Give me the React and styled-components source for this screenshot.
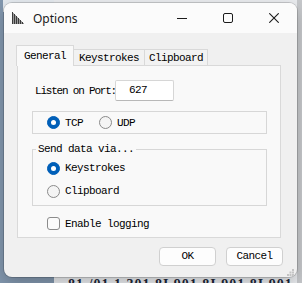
import React from 'react'
import styled, { createGlobalStyle } from 'styled-components'

const GlobalStyle = createGlobalStyle`
  html, body {
    margin: 0;
    padding: 0;
  }
  body {
    width: 302px;
    height: 283px;
    overflow: hidden;
    background: #8297ae;
  }
`

const uiFont = `"Liberation Mono", "DejaVu Sans Mono", monospace`

export default function App() {
  return (
    <Desktop>
      <GlobalStyle />
      <BackWindowTop />
      <BackWindow>
        <BackText>81 /01 1 301 8I 901 8I 901 8I 901</BackText>
      </BackWindow>

      <Window>
        <TitleBar>
          <AppIcon />
          <Title>Options</Title>
          <Controls>
            <ControlButton>
              <svg width="10" height="10" viewBox="0 0 10 10">
                <path d="M0 5.5h10" stroke="#1b1b1b" strokeWidth="1" />
              </svg>
            </ControlButton>
            <ControlButton>
              <svg width="10" height="10" viewBox="0 0 10 10">
                <rect x="0.5" y="0.5" width="9" height="9" rx="1.5" fill="none" stroke="#1b1b1b" strokeWidth="1" />
              </svg>
            </ControlButton>
            <ControlButton>
              <svg width="10" height="10" viewBox="0 0 10 10">
                <path d="M0.3 0.3L9.7 9.7M9.7 0.3L0.3 9.7" stroke="#1b1b1b" strokeWidth="1.1" />
              </svg>
            </ControlButton>
          </Controls>
        </TitleBar>

        <Content>
          <TabStrip>
            <Tab $active $width={58}>General</Tab>
            <Tab $width={71}>Keystrokes</Tab>
            <Tab $width={63}>Clipboard</Tab>
          </TabStrip>

          <Panel>
            <PortRow>
              <PortLabel>Listen on Port:</PortLabel>
              <PortInput>627</PortInput>
            </PortRow>

            <ProtocolGroup>
              <Radio checked label="TCP" />
              <Radio label="UDP" />
            </ProtocolGroup>

            <SendGroup>
              <Legend>Send data via...</Legend>
              <RadioList>
                <Radio checked label="Keystrokes" />
                <Radio label="Clipboard" />
              </RadioList>
            </SendGroup>

            <CheckRow>
              <CheckBox />
              <span>Enable logging</span>
            </CheckRow>
          </Panel>

          <ButtonRow>
            <Button>OK</Button>
            <Button>Cancel</Button>
          </ButtonRow>
        </Content>

        <Grip>
          <svg width="7" height="7" viewBox="0 0 7 7">
            <rect x="5" y="0" width="2" height="2" fill="#c4c4c4" />
            <rect x="2.5" y="2.5" width="2" height="2" fill="#c4c4c4" />
            <rect x="5" y="2.5" width="2" height="2" fill="#c4c4c4" />
            <rect x="0" y="5" width="2" height="2" fill="#c4c4c4" />
            <rect x="2.5" y="5" width="2" height="2" fill="#c4c4c4" />
            <rect x="5" y="5" width="2" height="2" fill="#c4c4c4" />
          </svg>
        </Grip>
      </Window>
    </Desktop>
  )
}

function AppIcon() {
  const bars = []
  for (let i = 0; i < 12; i++) {
    bars.push(
      <rect key={i} x={i} y={i} width="1" height={12 - i} fill={i % 2 === 0 ? '#3a3a3a' : '#9a9a9a'} />
    )
  }
  return (
    <IconBox width="12" height="12" viewBox="0 0 12 12">
      {bars}
    </IconBox>
  )
}

function Radio({ checked, label }) {
  return (
    <RadioItem>
      <RadioCircle $checked={checked} />
      <span>{label}</span>
    </RadioItem>
  )
}

const Desktop = styled.div`
  position: relative;
  width: 302px;
  height: 283px;
  overflow: hidden;
  box-sizing: border-box;
  padding: 3px 0 0 4px;
  background: #8297ae;
`

const BackWindowTop = styled.div`
  position: absolute;
  left: 3px;
  top: 0;
  right: 0;
  height: 12px;
  background: #e4e9ee;
`

const BackWindow = styled.div`
  position: absolute;
  left: 54px;
  top: 0;
  right: 0;
  bottom: 0;
  background: #e9ebee;
  border-right: 5px solid #c6c8cb;
`

const BackText = styled.div`
  position: absolute;
  left: 14px;
  bottom: -10px;
  font-family: "Liberation Serif", serif;
  font-size: 14px;
  font-weight: bold;
  color: #1c2638;
  white-space: nowrap;
  letter-spacing: 1px;
`

const Window = styled.div`
  position: relative;
  z-index: 1;
  width: 293px;
  height: 274px;
  display: flex;
  flex-direction: column;
  background: #f0f0f0;
  border-radius: 8px;
  overflow: hidden;
  box-shadow: 0 0 0 1px rgba(0, 0, 0, 0.16), 0 6px 16px rgba(0, 0, 0, 0.22);
  font-family: ${uiFont};
  font-size: 11px;
  letter-spacing: -0.6px;
  color: #000;
`

const TitleBar = styled.div`
  height: 30px;
  flex: none;
  display: flex;
  align-items: center;
  background: #fbfbfb;
`

const IconBox = styled.svg`
  margin-left: 8px;
  flex: none;
`

const Title = styled.div`
  margin-left: 9px;
  font-family: "Noto Sans", "Open Sans", sans-serif;
  font-size: 12px;
  letter-spacing: 0;
  color: #1a1a1a;
`

const Controls = styled.div`
  margin-left: auto;
  display: flex;
  height: 100%;
`

const ControlButton = styled.div`
  width: 46px;
  height: 100%;
  display: flex;
  align-items: center;
  justify-content: center;
`

const Content = styled.div`
  display: flex;
  flex-direction: column;
  padding: 12px 16px 0 13px;
`

const TabStrip = styled.div`
  display: flex;
  align-items: flex-start;
  height: 21px;
  margin-left: -1px;
`

const Tab = styled.div`
  position: relative;
  z-index: ${p => (p.$active ? 1 : 0)};
  box-sizing: border-box;
  width: ${p => p.$width}px;
  height: ${p => (p.$active ? 21 : 16)}px;
  margin-top: ${p => (p.$active ? 0 : 4)}px;
  line-height: ${p => (p.$active ? 20 : 16)}px;
  text-align: center;
  background: ${p => (p.$active ? '#f9f9f9' : '#f2f2f2')};
  border: 1px solid #d9d9d9;
  border-bottom: none;
  border-left: ${p => (p.$active ? '1px solid #d9d9d9' : 'none')};
`

const Panel = styled.div`
  box-sizing: border-box;
  height: 173px;
  margin-top: -1px;
  padding: 14px 0 0 14px;
  background: #f9f9f9;
  border: 1px solid #d9d9d9;
`

const PortRow = styled.div`
  display: flex;
  align-items: center;
  height: 21px;
  padding-left: 3px;
`

const PortLabel = styled.span`
  width: 80px;
  white-space: nowrap;
  letter-spacing: -1.2px;
`

const PortInput = styled.div`
  box-sizing: border-box;
  width: 59px;
  height: 21px;
  line-height: 19px;
  padding-left: 13px;
  background: #fff;
  border: 1px solid #d6d6d6;
  border-bottom-color: #b8b8b8;
  border-radius: 2px;
`

const ProtocolGroup = styled.div`
  box-sizing: border-box;
  width: 235px;
  height: 23px;
  margin-top: 10px;
  display: flex;
  align-items: center;
  gap: 16px;
  padding-left: 14px;
  border: 1px solid #d7d7d7;
`

const SendGroup = styled.fieldset`
  box-sizing: border-box;
  width: 235px;
  margin: 9px 0 0 0;
  padding: 0 0 6px 3px;
  border: 1px solid #d7d7d7;
`

const Legend = styled.legend`
  padding: 0 2px;
  line-height: 12px;
`

const RadioList = styled.div`
  display: flex;
  flex-direction: column;
  gap: 7px;
  padding: 5px 0 0 11px;
`

const RadioItem = styled.div`
  display: flex;
  align-items: center;
  gap: 5px;
  height: 16px;
`

const RadioCircle = styled.span`
  box-sizing: border-box;
  width: 13px;
  height: 13px;
  border-radius: 50%;
  flex: none;
  background: ${p => (p.$checked ? '#005fb8' : '#f4f4f4')};
  border: 1px solid ${p => (p.$checked ? '#005fb8' : '#8a8a8a')};
  display: flex;
  align-items: center;
  justify-content: center;

  &::after {
    content: '';
    display: ${p => (p.$checked ? 'block' : 'none')};
    width: 5px;
    height: 5px;
    border-radius: 50%;
    background: #fff;
  }
`

const CheckRow = styled.div`
  display: flex;
  align-items: center;
  gap: 5px;
  height: 13px;
  margin-top: 11px;
  padding-left: 15px;
`

const CheckBox = styled.span`
  box-sizing: border-box;
  width: 13px;
  height: 13px;
  border: 1px solid #8b8b8b;
  border-radius: 3px;
  background: #fbfbfb;
`

const ButtonRow = styled.div`
  display: flex;
  justify-content: flex-end;
  gap: 10px;
  margin: 9px -2px 0 0;
`

const Button = styled.div`
  box-sizing: border-box;
  width: 57px;
  height: 19px;
  line-height: 17px;
  text-align: center;
  background: #fdfdfd;
  border: 1px solid #d0d0d0;
  border-radius: 4px;
`

const Grip = styled.div`
  position: absolute;
  right: 3px;
  bottom: 1px;
  line-height: 0;
`
